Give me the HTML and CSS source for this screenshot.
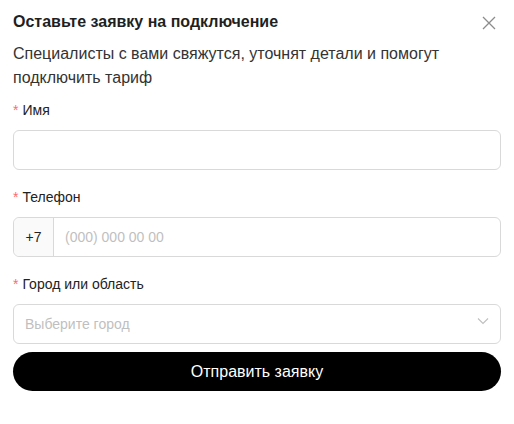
FILE: index.html
```html
<!DOCTYPE html>
<html lang="ru">
<head>
<meta charset="utf-8">
<link rel="stylesheet" href="styles.css">
</head>
<body>
<div class="modal">
  <div class="head">
    <div class="title">Оставьте заявку на подключение</div>
    <button class="close" aria-label="Закрыть">
      <svg width="14" height="14" viewBox="0 0 14 14"><path d="M1 1L13 13M13 1L1 13" stroke="#8c8c8c" stroke-width="1.3" fill="none"/></svg>
    </button>
  </div>
  <p class="desc">Специалисты с вами свяжутся, уточнят детали и помогут подключить тариф</p>
  <form class="form">
    <div class="item">
      <label class="label"><span class="req">*</span>Имя</label>
      <div class="input"></div>
    </div>
    <div class="item">
      <label class="label"><span class="req">*</span>Телефон</label>
      <div class="input group">
        <span class="addon">+7</span>
        <span class="ph">(000) 000 00 00</span>
      </div>
    </div>
    <div class="item last">
      <label class="label"><span class="req">*</span>Город или область</label>
      <div class="input select">
        <span class="ph">Выберите город</span>
        <svg class="chev" width="12" height="8" viewBox="0 0 12 8"><path d="M1 1.5L6 6.5L11 1.5" stroke="#bfbfbf" stroke-width="1.1" fill="none"/></svg>
      </div>
    </div>
    <button type="button" class="submit">Отправить заявку</button>
  </form>
</div>
</body>
</html>
```

FILE: styles.css
```css
* { box-sizing: border-box; }
html, body { margin: 0; padding: 0; background: #fff; }
body { font-family: "Liberation Sans", Arial, sans-serif; color: #222; }
.modal { padding: 11px 13px 0 13px; }
.head { display: flex; justify-content: space-between; align-items: center; height: 22px; }
.title { font-size: 16px; font-weight: bold; line-height: 22px; color: #1f1f1f; }
.close { border: 0; background: none; padding: 0; width: 14px; height: 14px; margin: 2px 5px 0 0; display: flex; }
.desc { margin: 9px 0 0 0; font-size: 16px; line-height: 24px; color: #333; }
.form { margin-top: 9px; display: flex; flex-direction: column; }
.item { display: flex; flex-direction: column; margin-bottom: 16px; }
.item.last { margin-bottom: 8px; }
.label { font-size: 14px; line-height: 22px; padding-bottom: 9px; color: #222; }
.req { color: #ff6b6b; margin-right: 4px; font-size: 14px; }
.input { height: 40px; border: 1px solid #d9d9d9; border-radius: 6px; background: #fff; display: flex; align-items: center; }
.group .addon { width: 40px; height: 100%; background: #fafafa; border-right: 1px solid #d9d9d9; border-radius: 6px 0 0 6px; display: flex; align-items: center; justify-content: center; font-size: 14px; color: #222; }
.group .ph { padding-left: 11px; }
.ph { font-size: 14px; color: #bfbfbf; }
.select { padding: 0 11px; justify-content: space-between; }
.chev { margin-bottom: 7px; }
.submit { height: 39px; border: 0; border-radius: 20px; background: #000; color: #fff; font-family: "Liberation Sans", Arial, sans-serif; font-size: 16px; cursor: pointer; }
```
